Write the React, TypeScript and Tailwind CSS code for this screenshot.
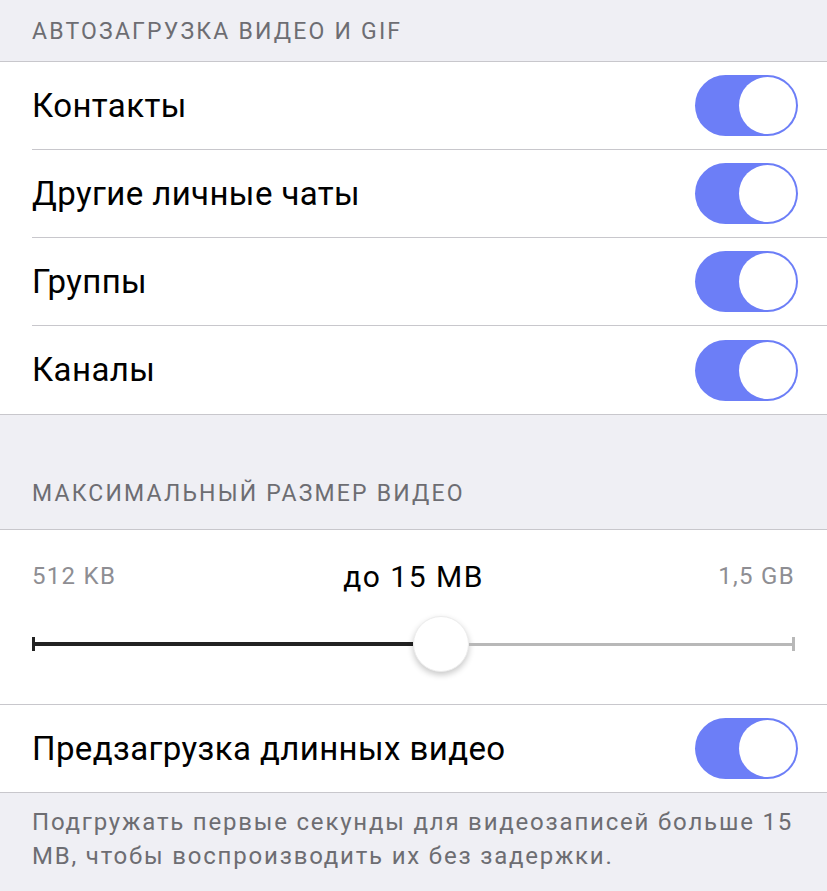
import React from 'react';

const font = { fontFamily: '"Roboto", "Liberation Sans", sans-serif' };

const Toggle: React.FC = () => (
  <div className="w-[103px] h-[61px] rounded-full bg-[#6c7ef7] flex items-center justify-end pr-[2px]">
    <div className="w-[57px] h-[57px] rounded-full bg-white" />
  </div>
);

const ToggleRow: React.FC<{ label: string; last?: boolean }> = ({ label, last }) => (
  <div className="pl-8">
    <div
      className={`h-[88px] flex items-center justify-between pr-[29px] ${
        last ? '' : 'border-b border-[#c8c7cc]'
      }`}
    >
      <span className="text-[33px] tracking-[0.4px] text-black">{label}</span>
      <Toggle />
    </div>
  </div>
);

export default function App() {
  return (
    <div className="w-[827px] min-h-[891px] bg-[#efeff4]" style={font}>
      {/* Autoload section */}
      <div className="h-[61px] flex items-center pl-8 pt-1">
        <span className="text-[23px] text-[#6d6d72] tracking-[2.2px]">АВТОЗАГРУЗКА ВИДЕО И GIF</span>
      </div>
      <div className="bg-white border-y border-[#c8c7cc]">
        <ToggleRow label="Контакты" />
        <ToggleRow label="Другие личные чаты" />
        <ToggleRow label="Группы" />
        <ToggleRow label="Каналы" last />
      </div>

      {/* Max size section */}
      <div className="h-[114px] flex items-end pl-8 pb-[18px]">
        <span className="text-[23px] text-[#6d6d72] tracking-[2.2px]">МАКСИМАЛЬНЫЙ РАЗМЕР ВИДЕО</span>
      </div>
      <div className="bg-white border-y border-[#c8c7cc]">
        <div className="h-[174px] px-8 pt-[30px]">
          <div className="flex items-center justify-between h-[32px]">
            <span className="text-[24px] tracking-[1.3px] text-[#8e8e93] w-[130px]">512 KB</span>
            <span className="text-[30px] tracking-[1.5px] text-black">до 15 MB</span>
            <span className="text-[24px] tracking-[1.3px] text-[#8e8e93] w-[130px] text-right">1,5 GB</span>
          </div>
          <div className="flex items-center mt-[24px] h-[56px]">
            <div className="w-[3px] h-[14px] bg-[#222]" />
            <div className="w-[378px] h-[4px] bg-[#222]" />
            <div className="w-[56px] h-[56px] rounded-full bg-white shadow-[0_3px_6px_rgba(0,0,0,0.22)] border border-[#ececec] shrink-0" />
            <div className="flex-1 h-[3px] bg-[#b8b8b8]" />
            <div className="w-[3px] h-[14px] bg-[#b8b8b8]" />
          </div>
        </div>
        <div className="border-t border-[#c8c7cc] h-[88px] flex items-center justify-between pl-8 pr-[29px]">
          <span className="text-[33px] tracking-[0.4px] text-black">Предзагрузка длинных видео</span>
          <Toggle />
        </div>
      </div>
      <div className="px-8 pt-[12px] pb-6">
        <p className="text-[24px] tracking-[1.8px] leading-[34px] text-[#6d6d72]">
          Подгружать первые секунды для видеозаписей больше 15 MB, чтобы воспроизводить их без задержки.
        </p>
      </div>
    </div>
  );
}
